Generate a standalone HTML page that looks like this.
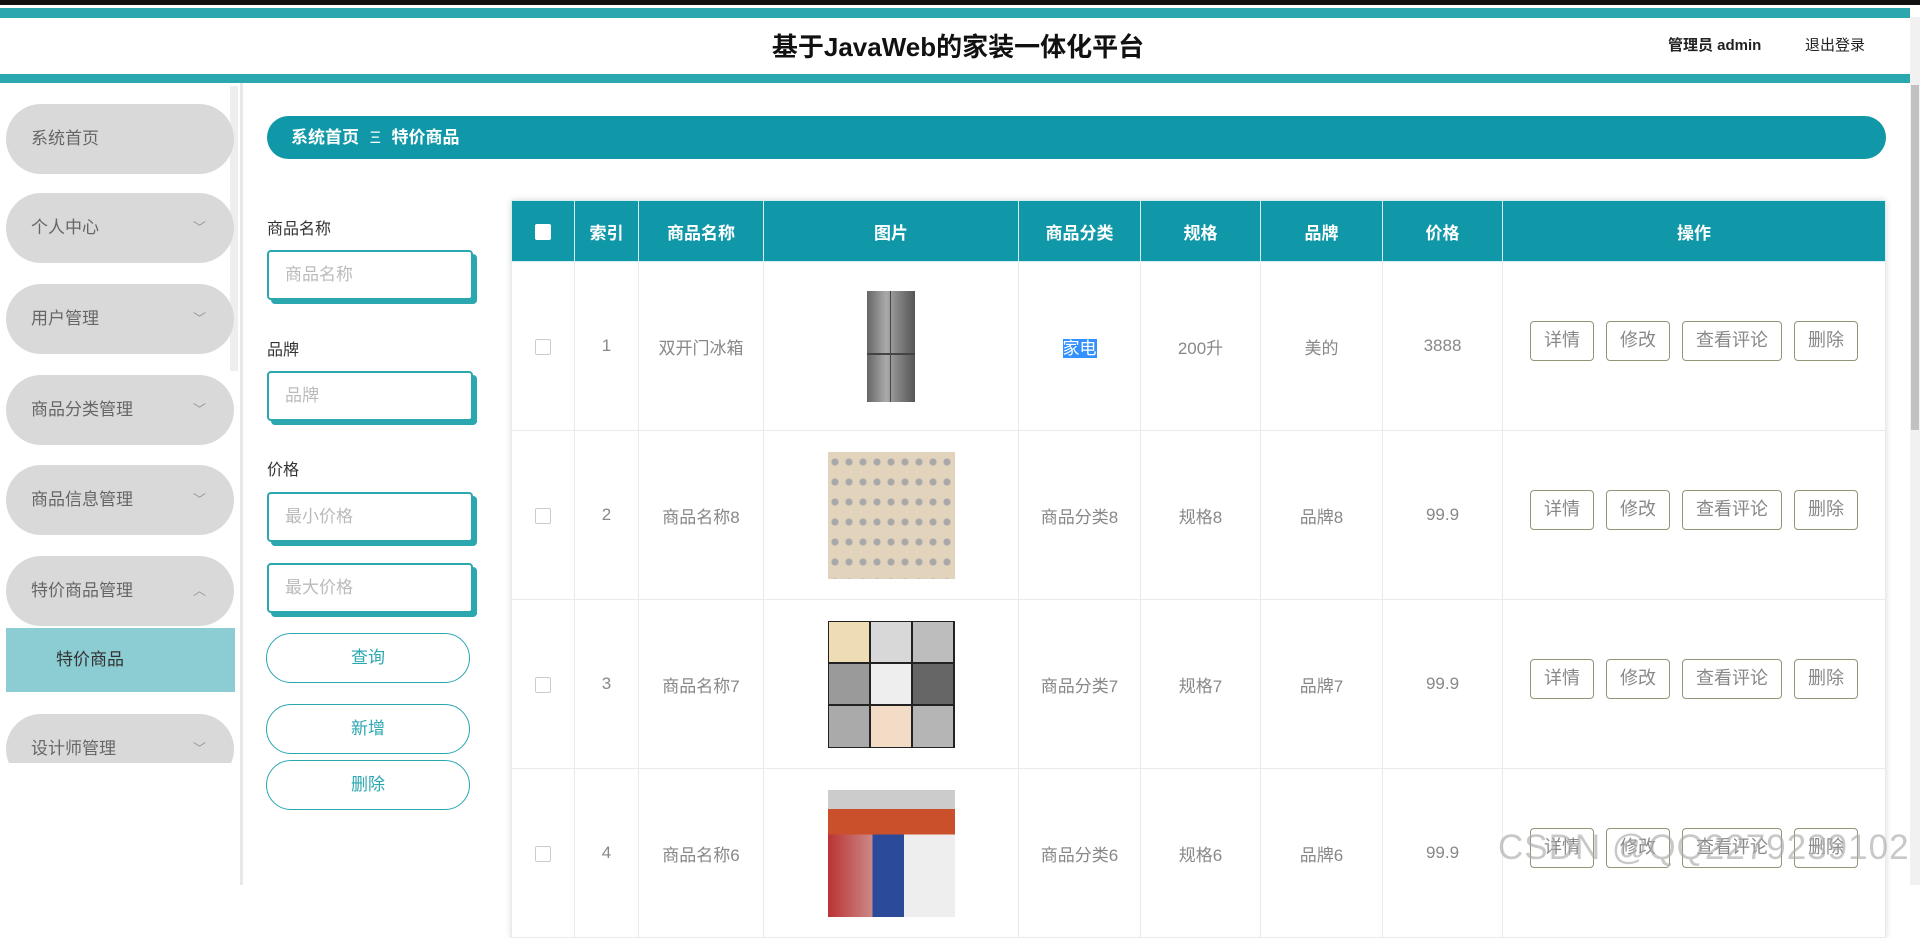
<!DOCTYPE html>
<html><head><meta charset="utf-8"><style>
*{margin:0;padding:0;box-sizing:border-box}
body{width:1920px;height:885px;overflow:hidden;background:#fff;font-family:"Liberation Sans","Noto Sans CJK SC",sans-serif;position:relative}
.a{position:absolute}
.pill{position:absolute;left:6px;width:228px;height:70px;border-radius:35px;background:#d9d9d9;color:#666;font-size:17px;line-height:70px;padding-left:25px}
.pill i{position:absolute;right:28px;top:0;font-style:normal;font-size:13px;color:#999}
.lbl{position:absolute;left:267px;font-size:16px;color:#333}
.inp{position:absolute;left:267px;width:206px;height:50px;border:2px solid #2ba7b0;border-radius:4px;box-shadow:4px 4px 0 #2ba7b0;color:#bbb;font-size:17px;line-height:46px;padding-left:16px;background:#fff}
.btn{position:absolute;left:266px;width:204px;height:50px;border:1.5px solid #2ba7b0;border-radius:25px;color:#2ba7b0;font-size:17px;text-align:center;line-height:47px}
table{position:absolute;left:511px;top:200px;width:1375px;border-collapse:collapse;box-shadow:0 0 6px rgba(0,0,0,.15)}
th{background:#1198a8;color:#fff;font-size:17px;height:61px;border:1px solid #d7eef0;font-weight:bold}
td{height:169px;border:1px solid #eaeaea;text-align:center;color:#888;font-size:17px}
.cb{display:inline-block;width:16px;height:16px;border:1px solid #ccc;border-radius:2px;vertical-align:middle}
.ob{display:inline-block;height:40px;border:1.5px solid #8e9878;border-radius:4px;color:#888;font-size:18px;line-height:36px;padding:0 13px;margin:0 6px;vertical-align:middle;position:relative;top:-5px}
.img{display:inline-block;width:127px;height:127px;vertical-align:middle}
</style></head><body>
<div class="a" style="left:0;top:0;width:1920px;height:5px;background:#111"></div>
<div class="a" style="left:0;top:8px;width:1910px;height:10px;background:#2ba7b0"></div>
<div class="a" style="left:0;top:74px;width:1910px;height:9px;background:#2ba7b0"></div>
<div class="a" style="left:0;top:27px;width:1920px;text-align:center;font-size:26px;font-weight:bold;color:#111;padding-right:4px">基于JavaWeb的家装一体化平台</div>
<div class="a" style="left:1668px;top:34px;font-size:15px;color:#222;font-weight:bold">管理员 admin</div>
<div class="a" style="left:1805px;top:34px;font-size:15px;color:#222">退出登录</div>
<div class="a" style="left:1910px;top:17px;width:10px;height:868px;background:#f1f1f1"></div>
<div class="a" style="left:1911px;top:85px;width:8px;height:345px;background:#c1c1c1"></div>

<div class="a" style="left:240px;top:83px;width:3px;height:802px;background:#e8e8e8"></div>
<div class="a" style="left:230px;top:86px;width:8px;height:285px;background:#eee"></div>
<div class="pill" style="top:104px">系统首页</div>
<div class="pill" style="top:193px">个人中心<i>﹀</i></div>
<div class="pill" style="top:284px">用户管理<i>﹀</i></div>
<div class="pill" style="top:375px">商品分类管理<i>﹀</i></div>
<div class="pill" style="top:465px">商品信息管理<i>﹀</i></div>
<div class="pill" style="top:556px">特价商品管理<i>︿</i></div>
<div class="a" style="left:6px;top:628px;width:229px;height:64px;background:#8ccdd3;color:#333;font-size:17px;line-height:64px;padding-left:50px">特价商品</div>
<div class="a" style="left:0;top:714px;width:240px;height:49px;overflow:hidden"><div class="pill" style="top:0">设计师管理<i>﹀</i></div></div>

<div class="a" style="left:267px;top:116px;width:1619px;height:43px;border-radius:22px;background:#1198a8;color:#fff;font-size:17px;font-weight:bold;line-height:43px;padding-left:24px">系统首页 <span style="font-weight:normal;margin:0 6px">Ξ</span> 特价商品</div>

<div class="lbl" style="top:215px">商品名称</div>
<div class="inp" style="top:250px">商品名称</div>
<div class="lbl" style="top:336px">品牌</div>
<div class="inp" style="top:371px">品牌</div>
<div class="lbl" style="top:456px">价格</div>
<div class="inp" style="top:492px">最小价格</div>
<div class="inp" style="top:563px">最大价格</div>
<div class="btn" style="top:633px">查询</div>
<div class="btn" style="top:704px">新增</div>
<div class="btn" style="top:760px">删除</div>

<table>
<tr><th style="width:63px"><span style="display:inline-block;width:16px;height:16px;background:#fff;border-radius:2px;vertical-align:middle"></span></th><th style="width:64px">索引</th><th style="width:125px">商品名称</th><th style="width:255px">图片</th><th style="width:122px">商品分类</th><th style="width:120px">规格</th><th style="width:122px">品牌</th><th style="width:120px">价格</th><th>操作</th></tr>
<tr><td><span class="cb"></span></td><td>1</td><td>双开门冰箱</td><td><span style="display:inline-block;width:48px;height:111px;background:linear-gradient(90deg,#666,#aaa 40%,#8a8a8a 60%,#555);vertical-align:middle;position:relative"><span style="position:absolute;left:0;right:0;top:62px;height:2px;background:#444"></span><span style="position:absolute;left:23px;width:1px;top:0;bottom:0;background:#444"></span></span></td><td><span style="background:#3390ff;color:#fff">家电</span></td><td>200升</td><td>美的</td><td>3888</td><td><span class="ob">详情</span><span class="ob">修改</span><span class="ob">查看评论</span><span class="ob">删除</span></td></tr>
<tr><td><span class="cb"></span></td><td>2</td><td>商品名称8</td><td><span class="img" style="background:radial-gradient(circle,#a8a8a8 3px,transparent 4px) 0 0/14px 20px,#e2d3bd"></span></td><td>商品分类8</td><td>规格8</td><td>品牌8</td><td>99.9</td><td><span class="ob">详情</span><span class="ob">修改</span><span class="ob">查看评论</span><span class="ob">删除</span></td></tr>
<tr><td><span class="cb"></span></td><td>3</td><td>商品名称7</td><td><span class="img" style="display:inline-grid;grid-template-columns:repeat(3,1fr);gap:2px;background:#222;padding:1px"><b style="background:#eedcb5"></b><b style="background:#d8d8d8"></b><b style="background:#bdbdbd"></b><b style="background:#9a9a9a"></b><b style="background:#eee"></b><b style="background:#666"></b><b style="background:#aaa"></b><b style="background:#f2dcc6"></b><b style="background:#b5b5b5"></b></span></td><td>商品分类7</td><td>规格7</td><td>品牌7</td><td>99.9</td><td><span class="ob">详情</span><span class="ob">修改</span><span class="ob">查看评论</span><span class="ob">删除</span></td></tr>
<tr><td><span class="cb"></span></td><td>4</td><td>商品名称6</td><td><span class="img" style="background:linear-gradient(180deg,#ccc 0,#ccc 15%,#c9502a 15%,#c9502a 35%,transparent 35%),linear-gradient(90deg,#b33 0,#c88 35%,#2b4a9a 35%,#2b4a9a 60%,#eee 60%)"></span></td><td>商品分类6</td><td>规格6</td><td>品牌6</td><td>99.9</td><td><span class="ob">详情</span><span class="ob">修改</span><span class="ob">查看评论</span><span class="ob">删除</span></td></tr>
</table>
<div class="a" style="left:1498px;top:828px;font-size:35px;color:rgba(170,170,170,.65);letter-spacing:1px">CSDN @QQ2279239102</div>
</body></html>
